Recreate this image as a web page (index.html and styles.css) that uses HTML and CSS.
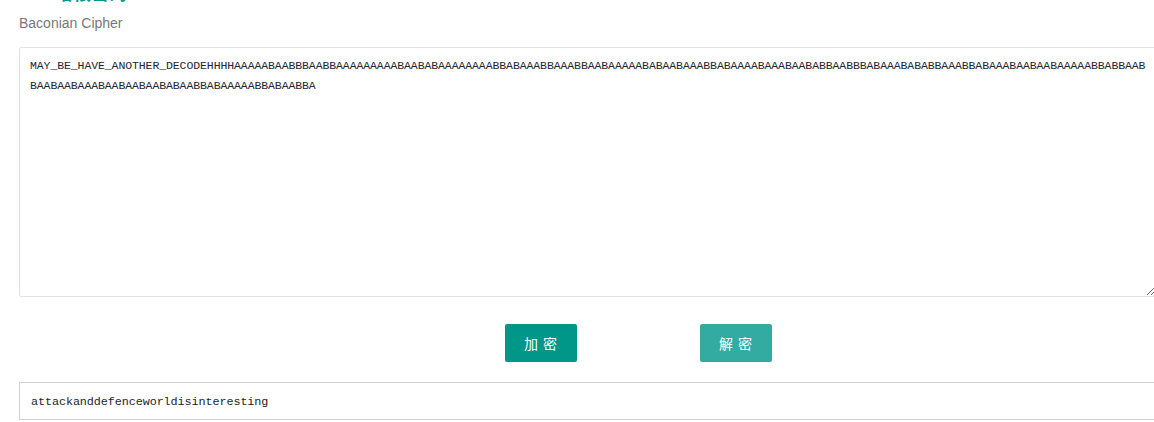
FILE: index.html
```html
<!DOCTYPE html>
<html lang="zh-CN">
<head>
<meta charset="utf-8">
<title>Baconian Cipher</title>
<link rel="stylesheet" href="styles.css">
</head>
<body>
<div class="page">
  <h2 class="title">培根密码</h2>
  <div class="label">Baconian Cipher</div>
  <textarea class="input" spellcheck="false">MAY_BE_HAVE_ANOTHER_DECODEHHHHAAAAABAABBBAABBAAAAAAAAABAABABAAAAAAAABBABAAABBAAABBAABAAAAABABAABAAABBABAAAABAAABAABABBAABBBABAAABABABBAAABBABAAABAABAABAAAAABBABBAABBAABAABAAABAABAABAABABAABBABAAAAABBABAABBA</textarea>
  <div class="actions">
    <button class="btn">加 密</button>
    <button class="btn btn-alt">解 密</button>
  </div>
  <div class="output">attackanddefenceworldisinteresting</div>
</div>
</body>
</html>
```

FILE: styles.css
```css
html, body {
  margin: 0;
  padding: 0;
  overflow: hidden;
  background: #fff;
}

.page {
  padding-left: 19px;
  font-family: "Liberation Sans", Arial, "Noto Sans CJK SC", sans-serif;
}

.title {
  margin: -20px 0 0 36px;
  height: 24px;
  font-size: 18px;
  line-height: 24px;
  font-weight: bold;
  color: #009688;
  font-family: "Noto Sans CJK SC", sans-serif;
}

.label {
  margin-top: 9px;
  font-size: 14px;
  line-height: 20px;
  color: #777;
}

.input {
  display: block;
  box-sizing: border-box;
  margin-top: 14px;
  width: 1137px;
  height: 250px;
  padding: 8px 7px 7px 10px;
  border: 1px solid #e2e2e2;
  border-radius: 2px;
  font-family: "Liberation Mono", "Courier New", monospace;
  font-size: 11.5px;
  letter-spacing: -0.1px;
  line-height: 20px;
  color: #262633;
  resize: vertical;
  outline: none;
}

.actions {
  display: flex;
  gap: 123px;
  margin-top: 27px;
  padding-left: 486px;
}

.btn {
  width: 72px;
  height: 38px;
  border: none;
  border-radius: 2px;
  background: #009688;
  color: #fff;
  font-family: "Noto Sans CJK SC", sans-serif;
  font-size: 14px;
  letter-spacing: 1px;
  padding: 0;
  cursor: pointer;
}

.btn-alt {
  background: #33aba0;
}

.output {
  box-sizing: border-box;
  margin-top: 20px;
  width: 1137px;
  height: 38px;
  padding: 2px 11px 0;
  border: 1px solid #d2d2d2;
  font-family: "Liberation Mono", "Courier New", monospace;
  font-size: 11.8px;
  letter-spacing: -0.1px;
  line-height: 34px;
  color: #1e1e1e;
}
```
